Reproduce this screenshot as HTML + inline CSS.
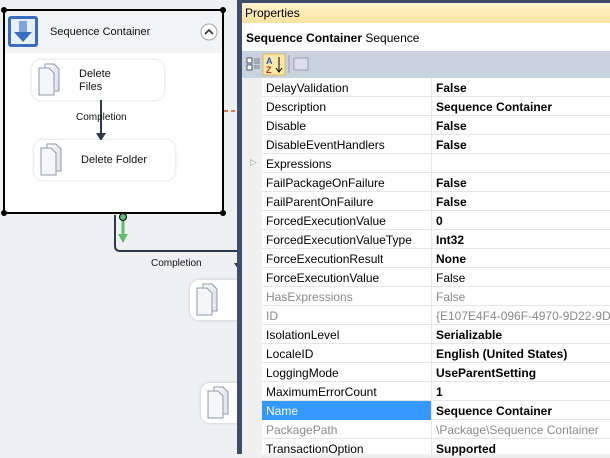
<!DOCTYPE html>
<html><head><style>
*{margin:0;padding:0;box-sizing:border-box}
body{width:610px;height:454px;overflow:hidden;background:#eff0f2;font-family:"Liberation Sans","DejaVu Sans",sans-serif;position:relative}
.abs{position:absolute}
.box{position:absolute;background:#fff;border-radius:9px;box-shadow:0 0 3px rgba(0,0,0,.18)}
.t{font-size:11px;color:#111}
#panel{left:237px;top:0;width:373px;height:454px;background:#3c4e6c}
#hdr{left:242px;top:3px;width:368px;height:20px;background:linear-gradient(#fdf3cf,#f8e39f);font-size:12px;padding:3px 0 0 3px;color:#000}
#obj{left:242px;top:23px;width:368px;height:28px;background:#fff;font-size:12px;padding:8px 0 0 4px}
#tb{left:242px;top:51px;width:368px;height:27px;background:#c9d2df}
#grid{left:242px;top:78px;width:368px;height:376px;background:#fff}
.row{position:absolute;left:0;width:368px;height:19px;border-bottom:1px solid #e6e6e6;font-size:12px}
.row .m{position:absolute;left:0;top:0;width:20px;height:19px;background:#f0f0f0}
.row .n{position:absolute;left:24px;top:3px}
.row .v{position:absolute;left:194px;top:3px;white-space:nowrap}
.row .d{position:absolute;left:189px;top:0;width:1px;height:19px;background:#e6e6e6}
.b{font-weight:bold}
.g{color:#8a8a8a}
</style></head><body>
<svg class="abs" style="left:0;top:0" width="240" height="454">
<rect x="4" y="10" width="219" height="203" fill="#fff" stroke="#000" stroke-width="2"/>
<rect x="5" y="11" width="217" height="42" fill="#f2f3f5"/>
<circle cx="4" cy="10" r="3"/><circle cx="223" cy="10" r="3"/><circle cx="4" cy="213" r="3"/><circle cx="223" cy="213" r="3"/>
<rect x="8" y="16" width="30" height="31" rx="3" fill="#3a6cc0"/>
<rect x="11" y="19" width="24" height="25" fill="#e9eef7"/>
<rect x="19" y="21" width="8" height="12" fill="#7fa6df"/>
<path d="M14 32 L32 32 L23 42 Z" fill="#3a6cc0"/>
<circle cx="209" cy="32" r="8" fill="#fff" stroke="#a8a8a8"/>
<path d="M205 34 L209 30 L213 34" fill="none" stroke="#333" stroke-width="1.6"/>
<line x1="101" y1="100" x2="101" y2="135" stroke="#2c3a50" stroke-width="2"/>
<path d="M96 133 L106 133 L101 141 Z" fill="#2c3a50"/>
<line x1="224" y1="111" x2="238" y2="111" stroke="#d0541c" stroke-width="1.5" stroke-dasharray="4,3"/>
<path d="M115 215 L115 246 Q115 251 120 251 L238 251" fill="none" stroke="#2c3a50" stroke-width="2"/>
<line x1="123" y1="220" x2="123" y2="236" stroke="#5fba72" stroke-width="3"/>
<path d="M118 234 L128 234 L123 243 Z" fill="#5fba72"/>
<circle cx="123" cy="217" r="3.5" fill="#5fba72" stroke="#1a1a1a" stroke-width="1.2"/>
<path d="M234 263 L239 263 L238 269 Z" fill="#2c3a50"/>
</svg>
<div class="box" style="left:32px;top:60px;width:132px;height:40px"></div>
<div class="box" style="left:34px;top:140px;width:141px;height:40px"></div>
<div class="box" style="left:190px;top:280px;width:60px;height:40px"></div>
<div class="box" style="left:201px;top:383px;width:60px;height:40px"></div>
<svg class="abs" style="left:0;top:0" width="240" height="454">
<defs><linearGradient id="dg2"><stop offset="0" stop-color="#fff"/><stop offset="1" stop-color="#dde2ea"/></linearGradient></defs>
<g id="d1" transform="translate(39,64)"><path d="M6 0 H15 L20 5 V27 H6 Z" fill="url(#dg2)" stroke="#8f99aa"/><path d="M0 4 H10 L15 9 V31 H0 Z" fill="#f4f6fa" stroke="#8f99aa"/></g>
<use href="#d1" transform="translate(2,80)"/>
<use href="#d1" transform="translate(158,220)"/>
<use href="#d1" transform="translate(169,323)"/>
</svg>
<div class="abs t" style="left:50px;top:26px">Sequence Container</div>
<div class="abs t" style="left:79px;top:68px;line-height:13px">Delete<br>Files</div>
<div class="abs" style="left:76px;top:112px;font-size:10px;color:#111">Completion</div>
<div class="abs t" style="left:81px;top:154px">Delete Folder</div>
<div class="abs" style="left:151px;top:258px;font-size:10px;color:#111">Completion</div>

<div id="panel" class="abs"></div>
<div id="hdr" class="abs">Properties</div>
<div id="obj" class="abs" style="padding-top:8px"><b>Sequence Container</b> Sequence</div>
<div id="tb" class="abs">
<svg width="80" height="26">
<rect x="5" y="7" width="5" height="5" fill="#fff" stroke="#333" stroke-width=".8"/><rect x="5" y="14" width="5" height="5" fill="#fff" stroke="#333" stroke-width=".8"/>
<path d="M12 8h6M12 10h6M12 12h6M12 15h6M12 17h6" stroke="#667" stroke-width=".8"/>
<rect x="21" y="3" width="22" height="21" fill="#fbe8a8" stroke="#e0b850"/>
<text x="24" y="13" font-size="9" font-weight="bold" fill="#2a55b0" font-family="Liberation Sans">A</text>
<text x="24" y="22" font-size="9" font-weight="bold" fill="#b03030" font-family="Liberation Sans">Z</text>
<path d="M37 6V20M34 17l3 4 3-4" stroke="#000" fill="none"/>
<line x1="47" y1="4" x2="47" y2="22" stroke="#99a"/>
<rect x="52" y="7" width="14" height="12" fill="#dde" stroke="#99a"/>
</svg></div>
<div id="grid" class="abs">
<div class="row" style="top:0"><div class="m"></div><div class="n">DelayValidation</div><div class="d"></div><div class="v b">False</div></div>
<div class="row" style="top:19px"><div class="m"></div><div class="n">Description</div><div class="d"></div><div class="v b">Sequence Container</div></div>
<div class="row" style="top:38px"><div class="m"></div><div class="n">Disable</div><div class="d"></div><div class="v b">False</div></div>
<div class="row" style="top:57px"><div class="m"></div><div class="n">DisableEventHandlers</div><div class="d"></div><div class="v b">False</div></div>
<div class="row" style="top:76px"><div class="m"><span style="position:absolute;left:8px;top:3px;font-size:9px;color:#999">▷</span></div><div class="n">Expressions</div><div class="d"></div><div class="v"></div></div>
<div class="row" style="top:95px"><div class="m"></div><div class="n">FailPackageOnFailure</div><div class="d"></div><div class="v b">False</div></div>
<div class="row" style="top:114px"><div class="m"></div><div class="n">FailParentOnFailure</div><div class="d"></div><div class="v b">False</div></div>
<div class="row" style="top:133px"><div class="m"></div><div class="n">ForcedExecutionValue</div><div class="d"></div><div class="v b">0</div></div>
<div class="row" style="top:152px"><div class="m"></div><div class="n">ForcedExecutionValueType</div><div class="d"></div><div class="v b">Int32</div></div>
<div class="row" style="top:171px"><div class="m"></div><div class="n">ForceExecutionResult</div><div class="d"></div><div class="v b">None</div></div>
<div class="row" style="top:190px"><div class="m"></div><div class="n">ForceExecutionValue</div><div class="d"></div><div class="v">False</div></div>
<div class="row" style="top:209px"><div class="m"></div><div class="n g">HasExpressions</div><div class="d"></div><div class="v g">False</div></div>
<div class="row" style="top:228px"><div class="m"></div><div class="n g">ID</div><div class="d"></div><div class="v g">{E107E4F4-096F-4970-9D22-9D260</div></div>
<div class="row" style="top:247px"><div class="m"></div><div class="n">IsolationLevel</div><div class="d"></div><div class="v b">Serializable</div></div>
<div class="row" style="top:266px"><div class="m"></div><div class="n">LocaleID</div><div class="d"></div><div class="v b">English (United States)</div></div>
<div class="row" style="top:285px"><div class="m"></div><div class="n">LoggingMode</div><div class="d"></div><div class="v b">UseParentSetting</div></div>
<div class="row" style="top:304px"><div class="m"></div><div class="n">MaximumErrorCount</div><div class="d"></div><div class="v b">1</div></div>
<div class="row" style="top:323px"><div class="m"></div><div style="position:absolute;left:20px;top:0;width:169px;height:19px;background:#3399ff"></div><div class="n" style="color:#fff">Name</div><div class="d"></div><div class="v b">Sequence Container</div></div>
<div class="row" style="top:342px"><div class="m"></div><div class="n g">PackagePath</div><div class="d"></div><div class="v g">\Package\Sequence Container</div></div>
<div class="row" style="top:361px"><div class="m"></div><div class="n">TransactionOption</div><div class="d"></div><div class="v b">Supported</div></div>
</div>
</body></html>
